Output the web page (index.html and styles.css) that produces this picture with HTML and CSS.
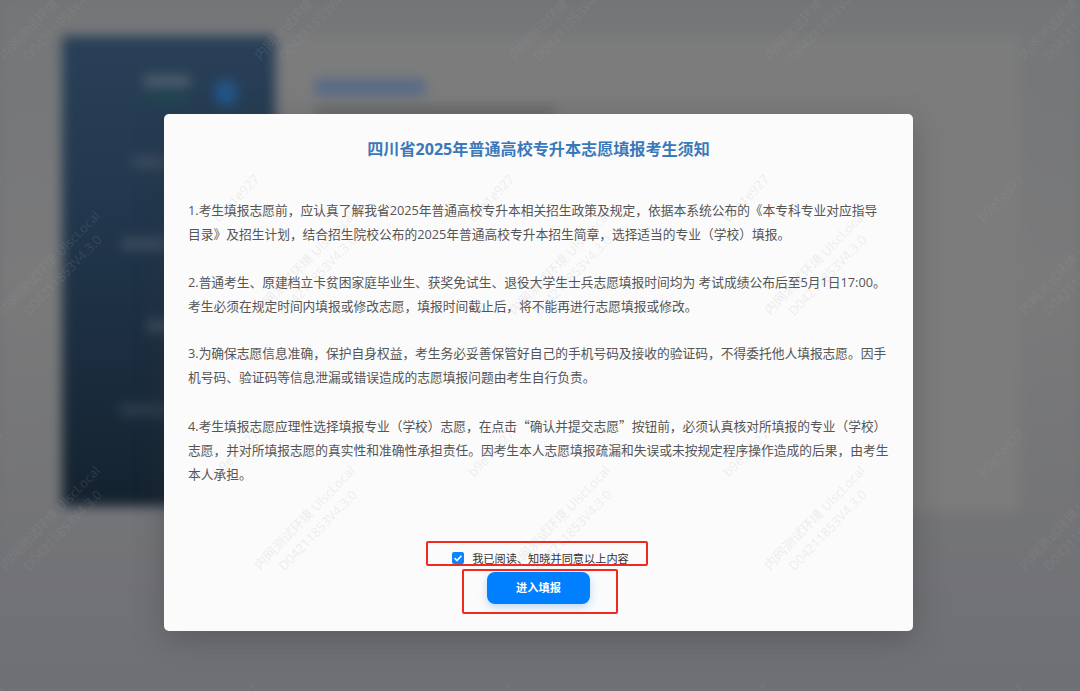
FILE: index.html
```html
<!DOCTYPE html>
<html lang="zh-CN">
<head>
<meta charset="utf-8">
<title>四川省2025年普通高校专升本志愿填报考生须知</title>
<link rel="stylesheet" href="styles.css">
</head>
<body>
<div class="page">
  <aside class="sidebar">
    <div class="side-head">
      <div class="side-user">
        <span class="blob blob-name"></span>
        <span class="blob blob-green"></span>
      </div>
      <span class="side-avatar"></span>
    </div>
    <span class="blob side-item item-1"></span>
    <span class="blob side-item item-2"></span>
    <span class="blob side-item item-3"></span>
    <span class="blob side-item item-4"></span>
  </aside>
  <main class="card">
    <span class="blob card-title"></span>
    <span class="blob card-sub"></span>
  </main>
</div>

<div class="overlay">
  <section class="modal">
    <h1 class="modal-title">四川省2025年普通高校专升本志愿填报考生须知</h1>
    <div class="notice">
      <p>1.考生填报志愿前，应认真了解我省2025年普通高校专升本相关招生政策及规定，依据本系统公布的《本专科专业对应指导<br>目录》及招生计划，结合招生院校公布的2025年普通高校专升本招生简章，选择适当的专业（学校）填报。</p>
      <p>2.普通考生、原建档立卡贫困家庭毕业生、获奖免试生、退役大学生士兵志愿填报时间均为 考试成绩公布后至5月1日17:00。<br>考生必须在规定时间内填报或修改志愿，填报时间截止后，将不能再进行志愿填报或修改。</p>
      <p>3.为确保志愿信息准确，保护自身权益，考生务必妥善保管好自己的手机号码及接收的验证码，不得委托他人填报志愿。因手<br>机号码、验证码等信息泄漏或错误造成的志愿填报问题由考生自行负责。</p>
      <p>4.考生填报志愿应理性选择填报专业（学校）志愿，在点击<span class="quote">“</span>确认并提交志愿<span class="quote">”</span>按钮前，必须认真核对所填报的专业（学校）<br>志愿，并对所填报志愿的真实性和准确性承担责任。因考生本人志愿填报疏漏和失误或未按规定程序操作造成的后果，由考生<br>本人承担。</p>
    </div>
    <div class="actions">
      <label class="agree">
        <span class="check">
          <svg viewBox="0 0 12 12" width="12" height="12"><path d="M2.6 6.2 5 8.5 9.4 3.8" fill="none" stroke="#fff" stroke-width="1.6"/></svg>
        </span>
        <span class="agree-text">我已阅读、知晓并同意以上内容</span>
      </label>
      <button class="enter" type="button">进入填报</button>
    </div>
    <span class="mark mark-agree"></span>
    <span class="mark mark-enter"></span>
  </section>
</div>

<div class="wm wm-a">
  <div>内网测试环境 UlscLocal<br>D04211853V4.3.0</div><div>内网测试环境 UlscLocal<br>D04211853V4.3.0</div><div>内网测试环境 UlscLocal<br>D04211853V4.3.0</div><div>内网测试环境 UlscLocal<br>D04211853V4.3.0</div><div>内网测试环境 UlscLocal<br>D04211853V4.3.0</div>
  <div>内网测试环境 UlscLocal<br>D04211853V4.3.0</div><div>内网测试环境 UlscLocal<br>D04211853V4.3.0</div><div>内网测试环境 UlscLocal<br>D04211853V4.3.0</div><div>内网测试环境 UlscLocal<br>D04211853V4.3.0</div><div>内网测试环境 UlscLocal<br>D04211853V4.3.0</div>
  <div>内网测试环境 UlscLocal<br>D04211853V4.3.0</div><div>内网测试环境 UlscLocal<br>D04211853V4.3.0</div><div>内网测试环境 UlscLocal<br>D04211853V4.3.0</div><div>内网测试环境 UlscLocal<br>D04211853V4.3.0</div><div>内网测试环境 UlscLocal<br>D04211853V4.3.0</div>
</div>
<div class="wm wm-b">
  <div>b9e1e927</div><div>b9e1e927</div><div>b9e1e927</div><div>b9e1e927</div><div>b9e1e927</div>
  <div>b9e1e927</div><div>b9e1e927</div><div>b9e1e927</div><div>b9e1e927</div><div>b9e1e927</div>
  <div>b9e1e927</div><div>b9e1e927</div><div>b9e1e927</div><div>b9e1e927</div><div>b9e1e927</div>
</div>
</body>
</html>
```
FILE: styles.css
```css
* { box-sizing: border-box; }
html, body {
  margin: 0;
  width: 1080px;
  height: 691px;
  overflow: hidden;
  background: #707276;
  font-family: "Open Sans", "Noto Sans CJK SC", sans-serif;
}

/* blurred application behind the dialog */
.page {
  width: 1080px;
  height: 691px;
  display: flex;
  align-items: flex-start;
  padding: 36px 60px 0 62px;
  gap: 6px;
  filter: blur(6px);
  background: linear-gradient(180deg, #747678 0, #7a7a7b 40%, #6f7074 100%);
}
.sidebar {
  width: 213px;
  height: 470px;
  flex: none;
  display: flex;
  flex-direction: column;
  background: linear-gradient(180deg, #294058 0, #22384e 35%, #14222f 100%);
}
.side-head {
  display: flex;
  justify-content: flex-end;
  gap: 24px;
  padding: 40px 37px 0 0;
}
.side-user { display: flex; flex-direction: column; gap: 8px; align-items: center; }
.blob { display: block; }
.blob-name { width: 46px; height: 10px; background: #53636f; }
.blob-green { width: 42px; height: 8px; background: #1f4a4f; }
.side-avatar {
  width: 24px;
  height: 26px;
  margin-top: 4px;
  border-radius: 50%;
  background: #23568a;
}
.side-item { height: 12px; background: #3b4c5e; }
.item-1 { width: 34px; margin: 50px 0 0 70px; }
.item-2 { width: 48px; margin: 70px 0 0 60px; }
.item-3 { width: 24px; margin: 70px 0 0 85px; }
.item-4 { width: 48px; margin: 72px 0 0 58px; background: #2d3d4e; }

.card {
  flex: 1;
  height: 475px;
  padding: 43px 0 0 34px;
  background: #7c7c7c;
}
.card-title { width: 110px; height: 16px; background: #566a86; }
.card-sub { width: 240px; height: 7px; margin-top: 13px; background: #5e5e5e; }

/* dialog */
.overlay {
  position: absolute;
  inset: 0;
  padding: 114px 0 0 164px;
}
.modal {
  position: relative;
  width: 749px;
  height: 517px;
  padding: 24px 20px 0 24px;
  display: flex;
  flex-direction: column;
  background: #fbfbfb;
  border-radius: 5px;
  box-shadow: 0 8px 30px rgba(50, 52, 56, 0.35);
}
.modal-title {
  margin: 0 4px 0 0;
  text-align: center;
  font-size: 16.1px;
  line-height: 22px;
  font-weight: 700;
  color: #3a79b9;
}
.notice {
  margin-top: 39px;
  font-size: 12.74px;
  line-height: 23.9px;
  color: #555;
  white-space: nowrap;
}
.notice p { margin: 0 0 23.9px; text-align: left; }
.quote { font-family: "Noto Sans CJK SC", sans-serif; }
.actions {
  margin-top: auto;
  margin-right: 4px;
  padding-bottom: 27px;
  display: flex;
  flex-direction: column;
  align-items: center;
}
.agree {
  display: flex;
  align-items: center;
  gap: 8px;
  height: 16px;
  margin-left: 4px;
  font-size: 11.2px;
  line-height: 16px;
  color: #333;
}
.agree-text { padding-top: 2px; }
.check {
  display: flex;
  width: 12px;
  height: 12px;
  border-radius: 2px;
  background: #0a84ff;
}
.enter {
  width: 103px;
  height: 32px;
  margin-top: 6px;
  padding: 0;
  border: 0;
  border-radius: 8px;
  background: #0080ff;
  box-shadow: 0 3px 8px rgba(0, 110, 230, 0.25);
  color: #fff;
  font: 700 11.2px/32px "Open Sans", "Noto Sans CJK SC", sans-serif;
}

/* red hand annotations */
.mark {
  position: absolute;
  border: 2px solid #f12a20;
  border-radius: 2px;
  pointer-events: none;
}
.mark-agree { left: 262px; top: 427px; width: 222px; height: 25px; }
.mark-enter { left: 298px; top: 455px; width: 156px; height: 45px; }

/* watermark tiles */
.wm {
  position: absolute;
  display: grid;
  grid-template-columns: repeat(5, 255px);
  grid-auto-rows: 255px;
  pointer-events: none;
  color: rgba(165, 165, 167, 0.18);
  font-size: 13px;
  line-height: 18px;
  text-align: center;
}
.wm > div {
  display: flex;
  align-items: center;
  justify-content: center;
  white-space: nowrap;
  transform: rotate(-46deg);
}
.wm-a { left: -72.5px; top: -114.5px; }
.wm-b { left: -147.5px; top: 69.5px; }
```
